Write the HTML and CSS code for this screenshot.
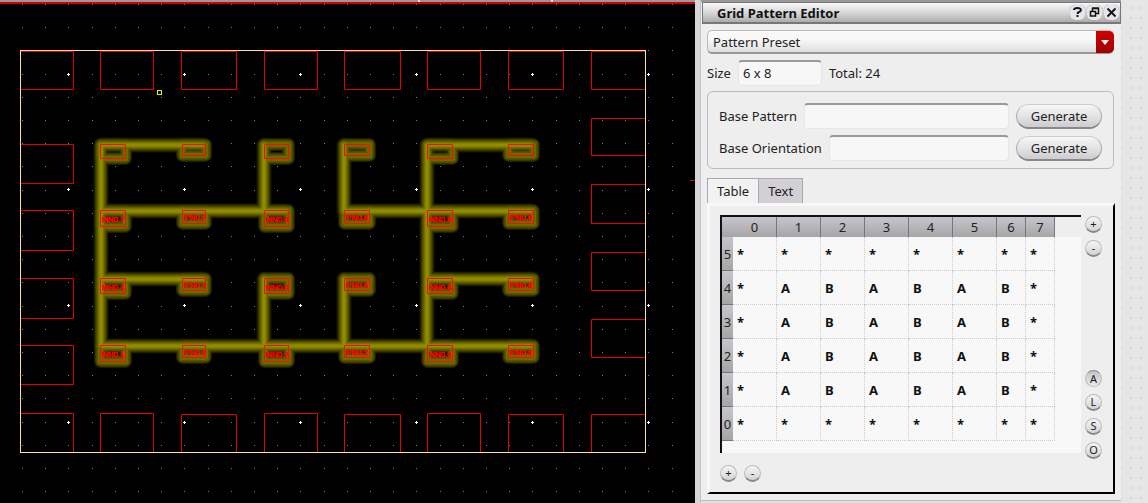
FILE: index.html
```html
<!DOCTYPE html>
<html lang="en">
<head>
<meta charset="utf-8">
<title>Grid Pattern Editor</title>
<link rel="stylesheet" href="styles.css">
</head>
<body>
<main class="canvas">
  <svg class="board" viewBox="0 0 695 503" preserveAspectRatio="xMinYMin slice" role="img" aria-label="Layout view">
    <rect width="695" height="2" fill="#999"/>
    <path d="M418 0h2v2h-2zM551 0h2v2h-2z" fill="#ddd"/>
    <rect y="2" width="695" height="2" fill="#d40000"/>
    <g id="grid" shape-rendering="crispEdges"></g>
    <g id="glow" fill="none" stroke-linejoin="round" stroke-linecap="round"></g>
    <g id="shapes" fill="none"></g>
    <g id="names" class="pin-names"></g>
    <rect x="20.5" y="50.5" width="625" height="402" fill="none" stroke="#ffdfae"/>
    <rect x="157.500" y="90.500" width="4" height="4" fill="none" stroke="#f0f000"/>
    <path d="M690 180.500h5" stroke="#e00000"/>
    <g id="marks" fill="#fff" shape-rendering="crispEdges"></g>
  </svg>
</main>
<div class="splitter"></div>
<section class="panel">
  <header class="titlebar">
    <h1 class="title">Grid Pattern Editor</h1>
    <button class="win-btn" type="button" aria-label="Help"><svg viewBox="0 0 15 15" width="15" height="15"><path d="M4 5V4.500Q4.500 3 7.500 3T11 5Q11 6.500 9 7Q7.500 7.500 7.500 9M7.500 10v2" fill="none" stroke="#111" stroke-width="1.900"/></svg></button>
    <button class="win-btn" type="button" aria-label="Float"><svg viewBox="0 0 15 15" width="15" height="15"><path d="M5.500 6V3.500h6v5H9M3.500 6.500h5v4.500h-5zM5 3h7M3 6.500h6" fill="none" stroke="#111" stroke-width="1.500"/></svg></button>
    <button class="win-btn" type="button" aria-label="Close"><svg viewBox="0 0 15 15" width="15" height="15"><path d="M3.500 3.500l8 8M11.500 3.500l-8 8" stroke="#111" stroke-width="1.800"/></svg></button>
  </header>
  <form class="content">
    <div class="preset">
      <select class="preset-select" aria-label="Pattern Preset"><option>Pattern Preset</option></select>
      <span class="preset-arrow"></span>
    </div>
    <div class="row">
      <label for="size">Size</label>
      <input class="field field-size" id="size" value="6 x 8">
      <span>Total: 24</span>
    </div>
    <div class="group">
      <div class="row">
        <label for="pattern">Base Pattern</label>
        <input class="field field-fill" id="pattern">
        <button class="generate" type="button">Generate</button>
      </div>
      <div class="row">
        <label for="orientation">Base Orientation</label>
        <input class="field field-fill" id="orientation">
        <button class="generate" type="button">Generate</button>
      </div>
    </div>
    <div class="tabs" role="tablist">
      <button class="tab tab-active" type="button" role="tab" aria-selected="true">Table</button>
      <button class="tab" type="button" role="tab" aria-selected="false">Text</button>
    </div>
    <div class="pane">
      <div class="frame">
        <table class="cells">
          <colgroup><col class="c-head"><col class="c-wide"><col class="c-wide"><col class="c-wide"><col class="c-wide"><col class="c-wide"><col class="c-wide"><col class="c-slim"><col class="c-slim"><col></colgroup>
          <thead><tr><td class="corner"></td><th>0</th><th>1</th><th>2</th><th>3</th><th>4</th><th>5</th><th>6</th><th>7</th><td class="rest"></td></tr></thead>
          <tbody>
            <tr><th>5</th><td>*</td><td>*</td><td>*</td><td>*</td><td>*</td><td>*</td><td>*</td><td>*</td></tr>
            <tr><th>4</th><td>*</td><td>A</td><td>B</td><td>A</td><td>B</td><td>A</td><td>B</td><td>*</td></tr>
            <tr><th>3</th><td>*</td><td>A</td><td>B</td><td>A</td><td>B</td><td>A</td><td>B</td><td>*</td></tr>
            <tr><th>2</th><td>*</td><td>A</td><td>B</td><td>A</td><td>B</td><td>A</td><td>B</td><td>*</td></tr>
            <tr><th>1</th><td>*</td><td>A</td><td>B</td><td>A</td><td>B</td><td>A</td><td>B</td><td>*</td></tr>
            <tr><th>0</th><td>*</td><td>*</td><td>*</td><td>*</td><td>*</td><td>*</td><td>*</td><td>*</td></tr>
          </tbody>
        </table>
      </div>
      <div class="side">
        <button class="round" type="button">+</button>
        <button class="round" type="button">-</button>
        <span class="spacer"></span>
        <button class="round round-on" type="button">A</button>
        <button class="round" type="button">L</button>
        <button class="round" type="button">S</button>
        <button class="round" type="button">O</button>
      </div>
      <div class="below">
        <button class="round" type="button">+</button>
        <button class="round" type="button">-</button>
      </div>
    </div>
  </form>
</section>
<div class="margin"></div>
<script src="board.js"></script>
</body>
</html>
```
FILE: board.js
```js
// Draws the layout view: grid, highlighted net, pads and pin names.
const put = (id, markup) => { document.getElementById(id).innerHTML = markup; };
const box = ([x, y, r, b]) => `M${x + 0.5} ${y + 0.5}H${r + 0.5}V${b + 0.5}H${x + 0.5}Z`;

let dots = '';
for (let j = 0; j < 22; j++) {
  for (let i = 0; i < 29; i++) {
    const x = Math.round(22 + i * 23.2), y = Math.round(4 + j * 23.2);
    dots += `M${x} ${y}h1v1h-1z`;
  }
}
put('grid', `<path d="${dots}" fill="#7c7c88"/>`);

let marks = '';
for (const x of [68, 184, 300, 416, 532, 648]) {
  for (const y of [74, 189, 305, 422]) marks += `M${x} ${y - 1}h1v3h-1zM${x - 1} ${y}h3v1h-3z`;
}
put('marks', `<path d="${marks}"/>`);

// Surrounding blocks: left, top, right, bottom
const cols = [[20, 73], [100, 153], [181, 236], [264, 317], [344, 400], [427, 480], [508, 563], [591, 645]];
const blocks = cols.map(([l, r]) => [l, 51, r, 89]);
cols.forEach(([l, r], i) => blocks.push([l, [0, 1, 3, 5].includes(i) ? 413 : 414, r, 452]));
[[144, 183], [210, 250], [278, 318], [345, 384]].forEach(([t, b]) => blocks.push([20, t, 73, b]));
[[118, 155], [184, 223], [252, 290], [319, 357]].forEach(([t, b]) => blocks.push([591, t, 645, b]));

// Pads of the array
const padX = [[100, 125], [182, 205], [264, 288], [344, 369], [427, 452], [508, 533]];
const padY = [[144, 158, 155], [210, 226, 223], [278, 293, 290], [345, 361, 357]];
const pads = padY.flatMap(([t, b, s]) => padX.map(([l, r], i) => [l, t, r, i % 2 ? s : b]));

const wires = 'M101 145H203M427 145H531M101 211H286M344 211H531M101 279H203M427 279H531M101 346H531'
  + 'M101 145V346M264 145V211M264 279V346M344 145V211M344 279V346M427 145V346';
const rims = pads.map(box).join('');
// One entry per band: colour, wire width, pad rim width
const bands = [['#151500', 15, 13], ['#2a2a00', 13, 12], ['#424100', 11, 10], ['#575500', 9, 8], ['#6b6900', 7, 5], ['#7e7b00', 5, 0], ['#8f8c00', 3, 0]];
put('glow', bands.map(([c, w, p]) =>
  `<path d="${wires}" stroke="${c}" stroke-width="${w}"/>`
  + (p ? `<path d="${rims}" stroke="${c}" stroke-width="${p}"/>` : '')).join(''));
put('shapes', `<path d="${blocks.map(box).join('')}" stroke="#e80000"/><path d="${rims}" stroke="#ff0a00"/>`);

const base = [null, 7, 4, 1];
let names = '';
base.forEach((n, j) => {
  if (!n) return;
  padX.forEach(([l], i) => {
    const y = padY[j][0] + (i % 2 ? 10 : 12);
    names += `<text x="${l + 2}" y="${y}">${i % 2 ? 'PN' : 'NN'}0.${n + Math.floor(i / 2)}</text>`;
  });
});
put('names', names);
```
FILE: styles.css
```css
* { box-sizing: border-box; }
body {
  margin: 0;
  height: 100vh;
  display: flex;
  overflow: hidden;
  background: #e2e2e2;
  color: #222;
  font: 13px/18px "Noto Sans", "Open Sans", sans-serif;
}
button, input, select { font: inherit; color: inherit; margin: 0; }
.canvas { flex: 1; min-width: 0; background: #000; }
.board { display: block; width: 100%; height: 100%; }
.pin-names { font: 8px "Liberation Sans", sans-serif; fill: #f00; stroke: #f00; stroke-width: 0.6px; }
.splitter { width: 6px; background: #d6d6d8; border-right: 1px solid #c0c0c8; }
.panel {
  width: 420px;
  display: flex;
  flex-direction: column;
  margin-bottom: 2px;
  background: #eee;
  border-top: 2px solid #999;
  border-bottom: 1px solid #bbbbc4;
}
.titlebar {
  display: flex;
  align-items: center;
  gap: 2px;
  height: 22px;
  margin-left: 1px;
  padding: 0 1px 0 14px;
  border: 1px solid #777;
  border-bottom-width: 2px;
  background: linear-gradient(#f8f8f8, #d4d4d4 55%, #acacac);
}
.title { flex: 1; margin: 0; font-size: 13px; line-height: 18px; color: #111; }
.win-btn {
  width: 15px;
  height: 15px;
  padding: 0;
  border: 0;
  border-radius: 5px;
  background: #e6e6ea;
  box-shadow: 0 0 1px #777;
}
.win-btn svg { display: block; }
.content { flex: 1; display: flex; flex-direction: column; padding: 6px; }
.preset { position: relative; height: 24px; margin: 0 1px 6px 0; }
.preset-select {
  appearance: none;
  width: 100%;
  height: 24px;
  padding: 0 24px 0 5px;
  border: 1px solid #bbb;
  border-bottom: 2px solid #999;
  border-radius: 5px;
  background: linear-gradient(#f8f8f8 40%, #dedede);
}
.preset-arrow {
  position: absolute;
  top: 1px;
  right: 0;
  width: 18px;
  height: 22px;
  border-radius: 0 5px 5px 0;
  background: linear-gradient(#d00000, #a00000);
  pointer-events: none;
}
.preset-arrow::after {
  content: "";
  position: absolute;
  left: 5px;
  top: 9px;
  border: 4px solid transparent;
  border-top: 5px solid #fff;
  border-bottom: 0;
}
.row { display: flex; align-items: center; gap: 7px; }
.field {
  min-width: 0;
  height: 26px;
  padding: 0 4px 2px;
  border: 1px solid #e6e6e6;
  border-top: 2px solid #999;
  border-radius: 4px;
  background: #f7f7f7;
}
.field-size { width: 84px; }
.field-fill { flex: 1; }
.group {
  display: flex;
  flex-direction: column;
  gap: 6px;
  margin: 5px 1px 9px 0;
  padding: 11px 11px 7px;
  border: 1px solid #bbbbc0;
  border-radius: 6px;
}
.generate {
  width: 86px;
  height: 25px;
  padding: 0;
  border: 1px solid #aaa;
  border-top-color: #ccc;
  border-bottom: 2px solid #888;
  border-radius: 13px;
  background: linear-gradient(#f6f6f6, #e4e4e4 50%, #cfcbd2);
}
.tabs { display: flex; }
.tab {
  height: 25px;
  padding: 0 9px;
  border: 1px solid #aaa;
  border-bottom: 0;
  background: #d2d0d4;
}
.tab-active { background: #f2f2f2; border-right: 0; }
.pane {
  flex: 1;
  display: grid;
  grid-template: 1fr auto / 1fr auto;
  gap: 6px 4px;
  padding: 9px 11px 10px 10px;
  border: solid #f7f7f7;
  border-width: 3px 2px 2px 3px;
  border-right-color: #000;
  border-bottom-color: #000;
}
.frame { margin-bottom: 6px; border-top: 2px solid #111; border-left: 2px solid #111; background: #f8f8f8; }
.cells { width: 100%; table-layout: fixed; border-collapse: separate; border-spacing: 0; }
.c-head { width: 11px; }
.c-wide { width: 44px; }
.c-slim { width: 29px; }
.cells th, .cells td { padding: 0; }
.cells thead tr { height: 20px; }
.cells thead th { font-weight: 400; border-right: 1px solid #777; background: linear-gradient(#c8c4cc, #a6a6a6); }
.cells .corner { background: linear-gradient(#c8c4cc, #a6a6a6); }
.cells .rest { background: #eee; }
.cells tbody tr { height: 34px; }
.cells tbody th { font-weight: 400; border-bottom: 1px solid #777; background: linear-gradient(#c8c4cc, #a6a6a6); }
.cells tbody td {
  padding-left: 4px;
  border-right: 1px dotted #ccc;
  border-bottom: 1px dotted #ccc;
  color: #111;
  font-weight: 700;
}
.side { display: flex; flex-direction: column; gap: 7px; padding-top: 1px; }
.spacer { flex: 1; }
.below { display: flex; gap: 7px; }
.round {
  width: 17px;
  height: 17px;
  padding: 0;
  border: 1px solid #bbb;
  border-bottom: 2px solid #888;
  border-radius: 50%;
  background: linear-gradient(#f6f6f6, #d4d2d6);
  font-size: 11px;
  line-height: 14px;
}
.round-on { border-top-color: #888; border-bottom: 1px solid #bbb; background: linear-gradient(#c4c2c8, #ececec); }
.margin {
  width: 27px;
  background: radial-gradient(circle, #d6d6d6 1px, transparent 1px) 5px 3px / 10px 10px #e6e6e6;
}
```
